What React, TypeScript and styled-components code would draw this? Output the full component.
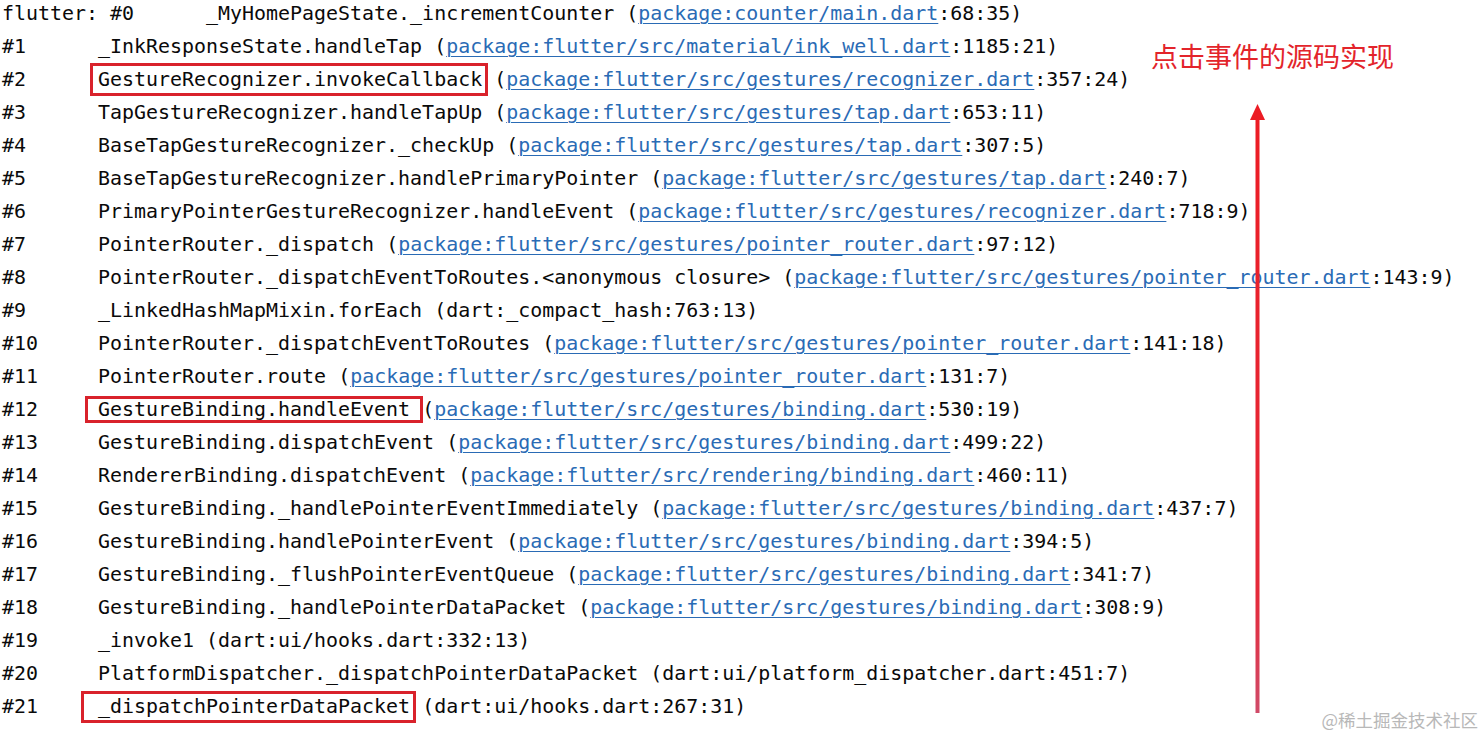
import React from "react";
import styled, { createGlobalStyle } from "styled-components";

const Global = createGlobalStyle`
  html, body { margin: 0; padding: 0; background: #ffffff; }
  body { width: 1483px; height: 737px; overflow: hidden; }
`;

const Page = styled.div`
  position: relative;
  width: 1483px;
  height: 737px;
  background: #ffffff;
  overflow: hidden;
`;

const Log = styled.div`
  display: flex;
  flex-direction: column;
  margin-top: -3px;
  padding-left: 2px;
  font-family: "DejaVu Sans Mono", "Liberation Mono", monospace;
  font-size: 19.94px;
  line-height: 33px;
  color: #0a0a0a;
  white-space: pre;
`;

const Line = styled.div`
  height: 33px;
`;

const Link = styled.span`
  color: #2a6bb5;
  text-decoration: underline;
  text-decoration-thickness: 1px;
  text-underline-offset: 3px;
`;

const Highlight = styled.span<{ $t: number; $b: number; $l: number; $r: number }>`
  position: relative;
  display: inline-block;
  height: 33px;
  &::after {
    content: "";
    position: absolute;
    box-sizing: border-box;
    top: ${(p) => p.$t}px;
    bottom: ${(p) => p.$b}px;
    left: ${(p) => p.$l}px;
    right: ${(p) => p.$r}px;
    border: 3px solid #d9222b;
    pointer-events: none;
  }
`;

const Note = styled.div`
  position: absolute;
  left: 1151px;
  top: 37px;
  font-family: "Noto Sans CJK SC", "Noto Sans", sans-serif;
  font-size: 27px;
  line-height: 38px;
  color: #e3242b;
  white-space: nowrap;
`;

const ArrowSvg = styled.svg`
  position: absolute;
  left: 1249px;
  top: 104px;
`;

const Watermark = styled.div`
  position: absolute;
  right: 5px;
  top: 708px;
  font-family: "Noto Sans CJK SC", "Noto Sans", sans-serif;
  font-size: 17.5px;
  line-height: 24px;
  color: #b8b8b8;
  white-space: nowrap;
`;

type Frame = {
  num: string;
  fn: string;
  link?: string;
  tail: string;
  box?: { t: number; b: number; l: number; r: number };
};

const pad = (s: string) => s + " ".repeat(Math.max(1, 8 - s.length));

const frames: Frame[] = [
  { num: "flutter: #0", fn: "_MyHomePageState._incrementCounter", link: "package:counter/main.dart", tail: ":68:35)" },
  { num: "#1", fn: "_InkResponseState.handleTap", link: "package:flutter/src/material/ink_well.dart", tail: ":1185:21)" },
  { num: "#2", fn: "GestureRecognizer.invokeCallback", link: "package:flutter/src/gestures/recognizer.dart", tail: ":357:24)", box: { t: 0, b: 0, l: -8, r: -6 } },
  { num: "#3", fn: "TapGestureRecognizer.handleTapUp", link: "package:flutter/src/gestures/tap.dart", tail: ":653:11)" },
  { num: "#4", fn: "BaseTapGestureRecognizer._checkUp", link: "package:flutter/src/gestures/tap.dart", tail: ":307:5)" },
  { num: "#5", fn: "BaseTapGestureRecognizer.handlePrimaryPointer", link: "package:flutter/src/gestures/tap.dart", tail: ":240:7)" },
  { num: "#6", fn: "PrimaryPointerGestureRecognizer.handleEvent", link: "package:flutter/src/gestures/recognizer.dart", tail: ":718:9)" },
  { num: "#7", fn: "PointerRouter._dispatch", link: "package:flutter/src/gestures/pointer_router.dart", tail: ":97:12)" },
  { num: "#8", fn: "PointerRouter._dispatchEventToRoutes.<anonymous closure>", link: "package:flutter/src/gestures/pointer_router.dart", tail: ":143:9)" },
  { num: "#9", fn: "_LinkedHashMapMixin.forEach", tail: "(dart:_compact_hash:763:13)" },
  { num: "#10", fn: "PointerRouter._dispatchEventToRoutes", link: "package:flutter/src/gestures/pointer_router.dart", tail: ":141:18)" },
  { num: "#11", fn: "PointerRouter.route", link: "package:flutter/src/gestures/pointer_router.dart", tail: ":131:7)" },
  { num: "#12", fn: "GestureBinding.handleEvent", link: "package:flutter/src/gestures/binding.dart", tail: ":530:19)", box: { t: 3, b: 3, l: -13, r: -13 } },
  { num: "#13", fn: "GestureBinding.dispatchEvent", link: "package:flutter/src/gestures/binding.dart", tail: ":499:22)" },
  { num: "#14", fn: "RendererBinding.dispatchEvent", link: "package:flutter/src/rendering/binding.dart", tail: ":460:11)" },
  { num: "#15", fn: "GestureBinding._handlePointerEventImmediately", link: "package:flutter/src/gestures/binding.dart", tail: ":437:7)" },
  { num: "#16", fn: "GestureBinding.handlePointerEvent", link: "package:flutter/src/gestures/binding.dart", tail: ":394:5)" },
  { num: "#17", fn: "GestureBinding._flushPointerEventQueue", link: "package:flutter/src/gestures/binding.dart", tail: ":341:7)" },
  { num: "#18", fn: "GestureBinding._handlePointerDataPacket", link: "package:flutter/src/gestures/binding.dart", tail: ":308:9)" },
  { num: "#19", fn: "_invoke1", tail: "(dart:ui/hooks.dart:332:13)" },
  { num: "#20", fn: "PlatformDispatcher._dispatchPointerDataPacket", tail: "(dart:ui/platform_dispatcher.dart:451:7)" },
  { num: "#21", fn: "_dispatchPointerDataPacket", tail: "(dart:ui/hooks.dart:267:31)", box: { t: 1, b: 0, l: -17, r: -6 } },
];

function FrameLine({ f }: { f: Frame }) {
  const prefix = f.num.startsWith("flutter") ? "flutter: " + pad("#0") : pad(f.num);
  const fn = f.box ? (
    <Highlight $t={f.box.t} $b={f.box.b} $l={f.box.l} $r={f.box.r}>
      {f.fn}
    </Highlight>
  ) : (
    f.fn
  );
  return (
    <Line>
      {prefix}
      {fn}
      {" "}
      {f.link ? (
        <>
          (<Link>{f.link}</Link>
          {f.tail}
        </>
      ) : (
        f.tail
      )}
    </Line>
  );
}

export default function App() {
  return (
    <Page>
      <Global />
      <Log>
        {frames.map((f) => (
          <FrameLine key={f.num} f={f} />
        ))}
      </Log>
      <Note>点击事件的源码实现</Note>
      <ArrowSvg width="17" height="612" viewBox="0 0 17 612">
        <defs>
          <linearGradient id="shaft" x1="0" y1="0" x2="0" y2="1">
            <stop offset="0" stopColor="#ec1c24" />
            <stop offset="0.8" stopColor="#e42a3a" />
            <stop offset="1" stopColor="#d04a68" />
          </linearGradient>
        </defs>
        <rect x="6.5" y="12" width="4" height="597" fill="url(#shaft)" />
        <polygon points="8.5,0 1,16 16,16" fill="#ec1c24" />
      </ArrowSvg>
      <Watermark>@稀土掘金技术社区</Watermark>
    </Page>
  );
}
